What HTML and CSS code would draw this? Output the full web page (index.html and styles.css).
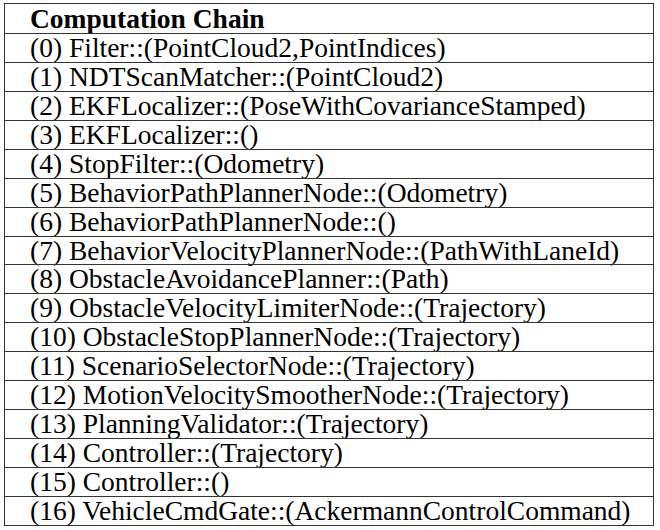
FILE: index.html
```html
<!DOCTYPE html>
<html>
<head>
<meta charset="utf-8">
<link rel="stylesheet" href="styles.css">
</head>
<body>
<div class="chain">
<div class="row head">Computation Chain</div>
<div class="row">(0) Filter::(PointCloud2,PointIndices)</div>
<div class="row">(1) NDTScanMatcher::(PointCloud2)</div>
<div class="row">(2) EKFLocalizer::(PoseWithCovarianceStamped)</div>
<div class="row">(3) EKFLocalizer::()</div>
<div class="row">(4) StopFilter::(Odometry)</div>
<div class="row">(5) BehaviorPathPlannerNode::(Odometry)</div>
<div class="row">(6) BehaviorPathPlannerNode::()</div>
<div class="row">(7) BehaviorVelocityPlannerNode::(PathWithLaneId)</div>
<div class="row">(8) ObstacleAvoidancePlanner::(Path)</div>
<div class="row">(9) ObstacleVelocityLimiterNode::(Trajectory)</div>
<div class="row">(10) ObstacleStopPlannerNode::(Trajectory)</div>
<div class="row">(11) ScenarioSelectorNode::(Trajectory)</div>
<div class="row">(12) MotionVelocitySmootherNode::(Trajectory)</div>
<div class="row">(13) PlanningValidator::(Trajectory)</div>
<div class="row">(14) Controller::(Trajectory)</div>
<div class="row">(15) Controller::()</div>
<div class="row">(16) VehicleCmdGate::(AckermannControlCommand)</div>
</div>
</body>
</html>
```
FILE: styles.css
```css
body {
  margin: 3px 0 0 4px;
  background: #fff;
  font-family: "Liberation Serif", serif;
  font-size: 27.5px;
  color: #000;
}
.chain {
  width: 648px;
  border: 1px solid #333;
  display: flex;
  flex-direction: column;
}
.row {
  font-family: "Liberation Serif", serif;
  height: 27.94px;
  line-height: 28px;
  padding-left: 25px;
  border-top: 1px solid #333;
  white-space: nowrap;
}
.row:first-child {
  border-top: 0;
  height: 28.94px;
  line-height: 29px;
}
.head {
  font-weight: bold;
}
```
